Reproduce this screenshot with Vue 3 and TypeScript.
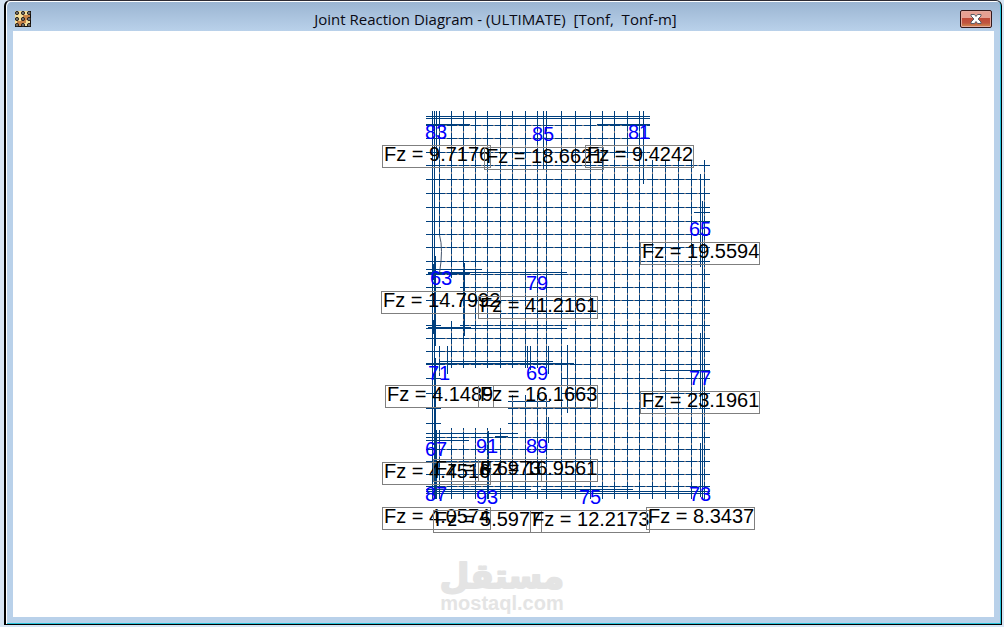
<script setup lang="ts">
interface Line { at: number; from: number; to: number; w?: number }
interface Joint { id: number; x: number; y: number; value: string; bx: number; by: number; bw: number }

const vertical: Line[] = [
  { at: 432, from: 111, to: 499 },
  { at: 434, from: 111, to: 499 },
  { at: 436, from: 111, to: 160 },
  { at: 439, from: 111, to: 235 },
  { at: 439, from: 346, to: 376 },
  { at: 439, from: 430, to: 499 },
  ...[451, 463, 475, 487, 500].flatMap((at) => [
    { at, from: 111, to: at === 451 ? 278 : 368 },
    { at, from: 428, to: 499 },
  ]),
  { at: 451, from: 321, to: 368 },
  ...[512, 525, 537, 546].flatMap((at) => [
    { at, from: 111, to: 368 },
    { at, from: 395, to: 499 },
  ]),
  { at: 543, from: 111, to: 170 },
  ...[561, 575, 590, 602, 614, 627, 639].map((at) => ({ at, from: 111, to: 499 })),
  { at: 643, from: 111, to: 184 },
  ...[652, 665, 678, 691, 704].map((at) => ({ at, from: 160, to: 499 })),
  { at: 702, from: 201, to: 499 },
  { at: 700, from: 174, to: 267 },
  { at: 700, from: 333, to: 408 },
  { at: 700, from: 443, to: 497 },
  { at: 434, from: 256, to: 346, w: 2 },
  { at: 433, from: 264, to: 280, w: 3 },
  { at: 433, from: 320, to: 334, w: 3 },
  { at: 464, from: 263, to: 336 },
  { at: 447, from: 346, to: 374 },
  { at: 527, from: 346, to: 368 },
  { at: 530, from: 346, to: 370 },
  { at: 548, from: 346, to: 374 },
  { at: 567, from: 345, to: 413 },
  { at: 434, from: 358, to: 499, w: 2 },
  { at: 436, from: 430, to: 499 },
  { at: 488, from: 431, to: 499 },
  { at: 548, from: 417, to: 443 },
]

const horizontal: Line[] = [
  ...[116, 118, 125, 138, 152].map((at) => ({ at, from: 426, to: 650 })),
  { at: 124, from: 426, to: 470 },
  { at: 124, from: 597, to: 650 },
  ...[165, 179, 193, 207, 221, 234, 247, 261, 274, 338, 351, 364, 437, 449, 461, 474, 486, 491, 493].map(
    (at) => ({ at, from: 426, to: 710 }),
  ),
  ...[287, 300, 313, 325].flatMap((at) => [
    { at, from: 426, to: 441 },
    { at, from: 460, to: 710 },
  ]),
  { at: 378, from: 426, to: 441 },
  { at: 378, from: 562, to: 710 },
  { at: 393, from: 426, to: 441 },
  { at: 393, from: 562, to: 710 },
  { at: 408, from: 426, to: 441 },
  { at: 408, from: 508, to: 710 },
  { at: 423, from: 426, to: 441 },
  { at: 423, from: 508, to: 710 },
  { at: 401, from: 508, to: 550 },
  { at: 212, from: 694, to: 710 },
  { at: 269, from: 426, to: 482 },
  { at: 272, from: 428, to: 567 },
  { at: 273, from: 428, to: 470 },
  { at: 328, from: 426, to: 567 },
  { at: 327, from: 428, to: 471 },
  { at: 361, from: 440, to: 553 },
  { at: 363, from: 426, to: 574 },
  { at: 370, from: 660, to: 710 },
  { at: 433, from: 426, to: 518 },
  { at: 436, from: 495, to: 508 },
  { at: 440, from: 426, to: 469 },
  { at: 489, from: 426, to: 531 },
  { at: 489, from: 541, to: 633 },
]

// Pale nodes halfway between the main grid lines
const columns = [439, 451, 463, 475, 487, 500, 512, 525, 537, 546, 561, 575, 590, 602, 614, 627, 639, 652, 665, 678, 691, 704]
const rows = [125, 138, 152, 165, 179, 193, 207, 221, 234, 247, 261, 274, 287, 300, 313, 325, 338, 351, 364, 378, 393, 408, 423, 437, 449, 461, 474, 486]
const covers = (lines: Line[], at: number, p: number) =>
  lines.some((l) => l.at === at && l.from < p && l.to > p + 1)
const middle = (a: number, b: number) => Math.floor((a + b) / 2)

const nodes: { x: number; y: number; w: number; h: number }[] = []
for (const y of rows) {
  columns.slice(1).forEach((c, i) => {
    const x = middle(columns[i], c)
    if (covers(horizontal, y, x)) nodes.push({ x, y, w: 2, h: 1 })
  })
}
for (const x of columns) {
  rows.slice(1).forEach((r, i) => {
    const y = middle(rows[i], r)
    if (covers(vertical, x, y)) nodes.push({ x, y, w: 1, h: 2 })
  })
}

const joints: Joint[] = [
  { id: 83, x: 436, y: 139, value: '9.7176', bx: 382, by: 145, bw: 108 },
  { id: 85, x: 543, y: 141, value: '18.6621', bx: 484, by: 147, bw: 119 },
  { id: 81, x: 639, y: 139, value: '9.4242', bx: 585, by: 145, bw: 108 },
  { id: 65, x: 700, y: 236, value: '19.5594', bx: 640, by: 242, bw: 119 },
  { id: 63, x: 441, y: 285, value: '14.7992', bx: 381, by: 291, bw: 119 },
  { id: 79, x: 537, y: 290, value: '41.2161', bx: 478, by: 296, bw: 119 },
  { id: 71, x: 439, y: 380, value: '4.1489', bx: 385, by: 385, bw: 108 },
  { id: 69, x: 537, y: 380, value: '16.1663', bx: 478, by: 385, bw: 119 },
  { id: 77, x: 700, y: 385, value: '23.1961', bx: 640, by: 391, bw: 119 },
  { id: 67, x: 436, y: 456, value: '4.4516', bx: 382, by: 462, bw: 108 },
  { id: 91, x: 487, y: 453, value: '8.6973', bx: 433, by: 459, bw: 108 },
  { id: 89, x: 537, y: 453, value: '16.9561', bx: 478, by: 459, bw: 119 },
  { id: 87, x: 436, y: 501, value: '4.0574', bx: 382, by: 507, bw: 108 },
  { id: 93, x: 487, y: 504, value: '5.5977', bx: 433, by: 510, bw: 108 },
  { id: 75, x: 590, y: 504, value: '12.2173', bx: 530, by: 510, bw: 119 },
  { id: 73, x: 700, y: 501, value: '8.3437', bx: 646, by: 507, bw: 108 },
]
</script>

<template>
  <div class="desktop">
    <section class="window">
      <header class="titlebar">
        <svg class="app-icon" viewBox="0 0 16 16" aria-hidden="true">
          <rect width="16" height="16" fill="#120c08" />
          <rect width="15" height="15" fill="#f3dd9a" />
          <path d="M8 4h7v5H11v3H8v3H2v-5h4V7h2z" fill="#c98447" />
          <g fill="#777" stroke="#2b241d">
            <template v-for="y in 3" :key="y">
              <circle v-for="x in 3" :key="x" :cx="x * 6 - 4" :cy="y * 6 - 4" r="1.6" />
            </template>
          </g>
        </svg>
        <h1>Joint Reaction Diagram - (ULTIMATE)&nbsp; [Tonf,&nbsp; Tonf-m]</h1>
        <button class="close" type="button" aria-label="Close">
          <svg viewBox="0 0 12 10" aria-hidden="true">
            <path d="M1 .5h3.5L6 2.5 7.5.5H11V2L8 5l3 3v1.5H7.500L6 7.500 4.500 9.500H1V8l3-3-3-3z" fill="#fff" stroke="#5b5d66" />
          </svg>
        </button>
      </header>
      <main class="canvas">
        <svg class="diagram" viewBox="13 31 981 586" role="img" aria-label="Joint reactions">
          <g class="mesh">
            <rect v-for="(l, i) in vertical" :key="'v' + i" :x="l.at" :y="l.from" :width="l.w ?? 1" :height="l.to - l.from" />
            <rect v-for="(l, i) in horizontal" :key="'h' + i" :x="l.from" :y="l.at" :width="l.to - l.from" :height="l.w ?? 1" />
          </g>
          <g class="nodes">
            <rect v-for="(n, i) in nodes" :key="i" :x="n.x" :y="n.y" :width="n.w" :height="n.h" />
          </g>
          <path class="curve" d="M439.500 235q4 14 0 38" />
          <g v-for="j in joints" :key="j.id">
            <rect class="box" :x="j.bx + 0.5" :y="j.by + 0.5" :width="j.bw" height="22" />
            <text class="value" :x="j.bx + 2" :y="j.by + 16">Fz = {{ j.value }}</text>
            <text class="joint" :x="j.x" :y="j.y">{{ j.id }}</text>
          </g>
          <g class="mark">
            <text class="arabic" x="502" y="588">مستقل</text>
            <text class="latin" x="502" y="610">mostaql.com</text>
          </g>
        </svg>
      </main>
    </section>
  </div>
</template>

<style>
body { margin: 0; background: #d6e4f3; }
</style>

<style scoped>
.desktop {
  box-sizing: border-box;
  height: 100vh;
  padding: 0 2px 2px 4px;
  background: #d6e4f3;
}
.window {
  box-sizing: border-box;
  height: 100%;
  display: flex;
  flex-direction: column;
  padding: 0 7px 7px;
  border: 1px solid #000;
  border-top-color: #2d2b33;
  border-left-width: 2px;
  border-radius: 6px 6px 0 0;
  background: linear-gradient(#9ab4d1, #b9d1ea 30px);
  box-shadow: inset 1px 1px #fff, inset -1px -1px #28c4dc;
}
.titlebar {
  flex: none;
  height: 30px;
  display: flex;
  align-items: center;
  padding: 6px 2px 0;
  box-sizing: border-box;
}
.app-icon { width: 16px; height: 16px; }
h1 {
  flex: 1;
  margin: 0;
  text-align: center;
  font: 400 15px/20px "Open Sans", "Noto Sans", sans-serif;
  color: #0a0a14;
  white-space: nowrap;
}
.close {
  width: 32px;
  height: 18px;
  padding: 0;
  display: flex;
  align-items: center;
  justify-content: center;
  border: 1px solid #34191b;
  border-radius: 2px;
  background: linear-gradient(#e6a093 45%, #bf4a38 46%, #c05540 75%, #d2924f);
  box-shadow: inset 0 0 0 1px #e3a99e;
}
.close svg { width: 12px; height: 10px; }
.canvas { flex: 1; min-height: 0; background: #fff; }
.diagram { display: block; width: 100%; height: 100%; }
.mesh { fill: #003f7d; shape-rendering: crispEdges; }
.nodes { fill: #7f7a80; shape-rendering: crispEdges; }
.curve { fill: none; stroke: #44546c; }
.box { fill: none; stroke: #7f7f7f; }
.value, .joint { font: 20px "Liberation Sans", Arial, sans-serif; }
.value { fill: #000; }
.joint { fill: #0000ff; text-anchor: middle; }
.mark { fill: #e4e4e4; text-anchor: middle; }
.arabic { font: 700 34px "DejaVu Sans", sans-serif; stroke: #e4e4e4; stroke-width: 2px; stroke-linejoin: round; }
.latin { font: 700 20px "Liberation Sans", Arial, sans-serif; }
</style>
